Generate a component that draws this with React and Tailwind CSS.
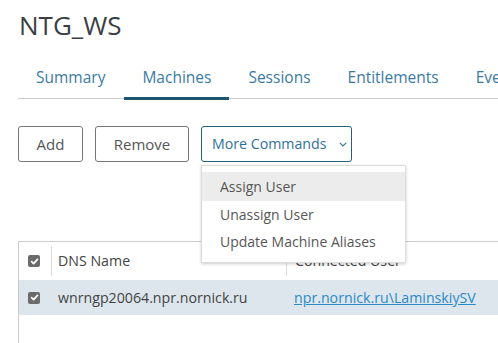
import React from "react";

function Check() {
  return (
    <span className="flex h-[12px] w-[12px] items-center justify-center rounded-[2px] bg-[#6b6b6b]">
      <svg width="9" height="9" viewBox="0 0 10 10">
        <path d="M1.8 5.2 L4 7.3 L8.3 2.6" fill="none" stroke="#fff" strokeWidth="1.9" strokeLinecap="round" strokeLinejoin="round" />
      </svg>
    </span>
  );
}

export default function App() {
  const tabs = ["Summary", "Machines", "Sessions", "Entitlements", "Events"];
  return (
    <div className="h-[343px] w-[498px] overflow-hidden bg-white pl-[18px] font-['Open_Sans',sans-serif]">
      <h1 className="mt-[10px] ml-[1px] text-[26px] leading-[30px] font-normal text-[#3a3f46]">NTG_WS</h1>

      <div className="mt-[27px] flex border-b border-[#cccccc] whitespace-nowrap">
        {tabs.map((t, i) => (
          <div
            key={t}
            className={
              "mr-[1px] px-[18px] pb-[10px] text-[15.5px] leading-[20px] text-[#3b7aa3] " +
              (i === 1 ? "-mb-[2px] border-b-[3px] border-[#1b5570] pb-[9px]" : "")
            }
          >
            {t}
          </div>
        ))}
      </div>

      <div className="mt-[27px] flex gap-[12px] whitespace-nowrap">
        <button className="h-[36px] w-[65px] rounded-[3px] border border-[#767676] text-[15px] text-[#555]">Add</button>
        <button className="h-[36px] w-[94px] rounded-[3px] border border-[#767676] text-[15px] text-[#555]">Remove</button>
        <div className="relative">
          <button className="flex h-[36px] w-[151px] items-center whitespace-nowrap rounded-[3px] border border-[#23607a] pl-[10px] text-[14.2px] text-[#2f7196]">
            <span>More Commands</span>
            <svg className="ml-[12px] shrink-0" width="8" height="5" viewBox="0 0 8 5">
              <path d="M0.8 0.8 L4 4 L7.2 0.8" fill="none" stroke="#2f7196" strokeWidth="1.1" />
            </svg>
          </button>
          <div className="absolute left-0 top-[39px] z-10 w-[205px] border border-[#dddddd] bg-white pt-[6px] pb-[7px] shadow-[0_1px_3px_rgba(0,0,0,0.2)]">
            <div className="flex h-[29px] items-center bg-[#ececec] pl-[18px] text-[14px] text-[#565656]">Assign User</div>
            <div className="flex h-[27px] items-center pl-[18px] text-[14px] text-[#565656]">Unassign User</div>
            <div className="flex h-[27px] items-center pl-[18px] text-[14px] text-[#565656]">Update Machine Aliases</div>
          </div>
        </div>
      </div>

      <div className="mt-[79px] h-[200px] w-[600px] border-l border-t border-[#cccccc] whitespace-nowrap">
        <div className="flex h-[38px] items-center text-[14.2px] text-[#444]">
          <div className="flex h-full w-[32px] items-center pl-[9px]">
            <Check />
          </div>
          <div className="h-[30px] w-px bg-[#dddddd]" />
          <div className="w-[234px] pl-[6px]">DNS Name</div>
          <div className="h-[30px] w-px bg-[#dddddd]" />
          <div className="pl-[8px]">Connected User</div>
        </div>
        <div className="flex h-[35px] items-center bg-[#dde6ed] text-[14.2px] text-[#444]">
          <div className="flex w-[32px] items-center pl-[9px]">
            <Check />
          </div>
          <div className="w-px" />
          <div className="w-[234px] pl-[6px]">wnrngp20064.npr.nornick.ru</div>
          <div className="w-px" />
          <div className="pl-[7px]">
            <a className="text-[#2b8ac6] underline" href="#">npr.nornick.ru\LaminskiySV</a>
          </div>
        </div>
      </div>
    </div>
  );
}
